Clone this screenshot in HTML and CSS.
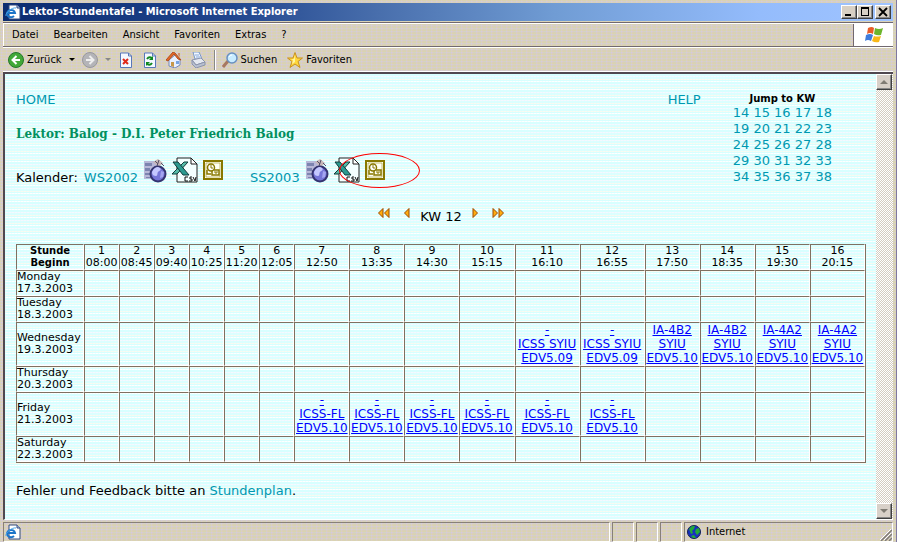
FILE: index.html
```
<!DOCTYPE html>
<html lang="de">
<head>
<meta charset="utf-8">
<title>Lektor-Stundentafel</title>
<link rel="stylesheet" href="styles.css">
</head>
<body>
<svg class="defs" aria-hidden="true">
  <symbol id="page-e" viewBox="0 0 16 16">
    <path d="M4 1h8l3 3v11H4z" fill="#fff" stroke="#334a80"/><path d="M12 1v3h3" fill="#b8c8e8" stroke="#334a80"/>
    <path d="M2 9h8a4 3.600 0 1 0-1 3" fill="none" stroke="#1c74c8" stroke-width="2"/>
    <path d="M1 12C0 9 7 3 11 4" fill="none" stroke="#49a5e8"/>
  </symbol>
  <symbol id="globe" viewBox="0 0 24 24">
    <path d="M1 2h12l3 3v15H1z" fill="#b8b8d8"/><path d="M2 4h7v3H2zM2 9h5v3H2zM2 14h5v2H2zM3 18h6v1H3z" fill="#7c84b0"/>
    <path d="M10 3l5-3 5 4-4 4z" fill="#c8b8b8"/><path d="M12 2l3 3M16 1l-2 6M18 4l3 3" stroke="#55506a"/>
    <circle cx="15" cy="15" r="7.500" fill="#7676d8" stroke="#343470" stroke-width="2"/>
    <path d="M9 13c2-5 6-6 8-4s-1 3-2 4 0 4-2 4-4-1-4-4z" fill="#c4c8ff"/><path d="M18 12l3 1-1 5-3 1z" fill="#a4a6f0"/>
  </symbol>
  <symbol id="csv" viewBox="0 0 26 26">
    <path d="M5 1h14l6 6v18H5z" fill="#f4ffff" stroke="#222"/><path d="M19 1v6h6z" fill="#fff" stroke="#222"/>
    <path d="M12 5h4L5 17H0z" fill="#55bca8" stroke="#103c3c"/><path d="M1 5h5l11 13h-6z" fill="#2b9a90" stroke="#103c3c"/>
    <path d="M16 20h-3v4h3M20 20h-2v2h2v2h-3M21 20l2 4 1-4" fill="none" stroke="#111"/>
  </symbol>
  <symbol id="outlook" viewBox="0 0 20 20">
    <path d="M0 0h20v20H0z" fill="#887800"/><path d="M2 2h16v16H2z" fill="#fffff0"/><path d="M3 3h14v14H3z" fill="#fffff0" stroke="#887800" stroke-width=".5"/>
    <path d="M4 10v4h4M11 10h5v5H9v-4" fill="none" stroke="#887800" stroke-width="1.500"/>
    <circle cx="8" cy="7.500" r="3.500" fill="#fff" stroke="#887800" stroke-width="1.500"/><path d="M8 5v3h2M12 11v2h2v-2" fill="none" stroke="#887800"/>
  </symbol>
  <symbol id="arrow" viewBox="0 0 6 10"><path d="M5 .500v9L.500 5z" fill="#ffac10" stroke="#9a4a00"/></symbol>
</svg>
<div class="window">
  <header class="titlebar">
    <svg class="i16"><use href="#page-e"/></svg>
    <span class="title">Lektor-Stundentafel - Microsoft Internet Explorer</span>
    <button class="cap" aria-label="Minimieren"><svg viewBox="0 0 12 10"><path d="M2 8h6" stroke="#000" stroke-width="2"/></svg></button>
    <button class="cap" aria-label="Maximieren"><svg viewBox="0 0 12 10"><path d="M2 1h8M2.500 1v8M9.500 1v8M2 8.500h8" fill="none" stroke="#000"/><path d="M2 1h8" stroke="#000" stroke-width="2"/></svg></button>
    <button class="cap close" aria-label="Schließen"><svg viewBox="0 0 12 10"><path d="M2 1l8 8M10 1L2 9" stroke="#000" stroke-width="1.800"/></svg></button>
  </header>
  <div class="menurow">
    <nav class="menu">
      <button>Datei</button><button>Bearbeiten</button><button>Ansicht</button><button>Favoriten</button><button>Extras</button><button>?</button>
    </nav>
    <div class="flag"><svg viewBox="0 0 20 18">
      <path d="M4 2q4-2 6 0L9 8Q6 6 3 8z" fill="#e85c28"/><path d="M11 2q4 2 8 0l-2 7q-4 1-7-1z" fill="#6cb52c"/>
      <path d="M2 9q4-2 7 0l-2 6q-3-2-6 0z" fill="#3e7cdc"/><path d="M10 10q3 1 7 0l-2 6q-4 1-7-1z" fill="#f8b818"/></svg></div>
  </div>
  <div class="toolbar">
    <button><svg class="i16" viewBox="0 0 16 16"><circle cx="8" cy="8" r="7.500" fill="#42a838" stroke="#26762a"/><path d="M8.500 4L4.500 8l4 4M5 8h7" fill="none" stroke="#fff" stroke-width="2"/></svg><span>Zurück</span></button>
    <button class="drop" aria-label="Verlauf zurück"><svg viewBox="0 0 6 4"><path d="M0 0h6L3 3z" fill="#000"/></svg></button>
    <button aria-label="Vorwärts"><svg class="i16" viewBox="0 0 16 16"><circle cx="8" cy="8" r="7.500" fill="#b4b4b8" stroke="#98989c"/><path d="M7.500 4l4 4-4 4M11 8H4" fill="none" stroke="#eee" stroke-width="2"/></svg></button>
    <button class="drop" aria-label="Verlauf vorwärts"><svg viewBox="0 0 6 4"><path d="M0 0h6L3 3z" fill="#888"/></svg></button>
    <button class="tool" aria-label="Abbrechen"><svg class="i16" viewBox="0 0 16 16"><path d="M2.500 1h8l3 3v11.500h-11z" fill="#f4f8ff" stroke="#5878b8"/><path d="M10.500 1v3h3" fill="none" stroke="#5878b8"/><path d="M5 7l5 5M10 7l-5 5" stroke="#e02818" stroke-width="2"/></svg></button>
    <button class="tool" aria-label="Aktualisieren"><svg class="i16" viewBox="0 0 16 16"><path d="M2.500 1h8l3 3v11.500h-11z" fill="#f4f8ff" stroke="#5878b8"/><path d="M10.500 1v3h3" fill="none" stroke="#5878b8"/><path d="M5 7q2-3 5-1M10 11q-2 3-5 1" fill="none" stroke="#108820" stroke-width="2"/><path d="M11 4v4H7zM4 14v-4h4z" fill="#108820"/></svg></button>
    <button class="tool" aria-label="Startseite"><svg class="i16" viewBox="0 0 16 16"><path d="M3 8v6l6 2 5-3V7L9 3z" fill="#e8f0ff" stroke="#7488b8"/><path d="M0 8l7-8 2 1 6 7-3-1-4-5-6 7z" fill="#e86828" stroke="#b05020"/><path d="M5 10h3v5l-3-1z" fill="#c89848"/><path d="M10 9h3v3h-3z" fill="#78a4e0"/><path d="M12 1h2v4l-2-2z" fill="#d09070"/></svg></button>
    <button class="tool" aria-label="Drucken"><svg class="i16" viewBox="0 0 16 16"><path d="M3 0h6l3 7H5z" fill="#f0f6ff" stroke="#7898c8"/><path d="M2 8l9-2 4 4-9 3z" fill="#e4e8f0" stroke="#8c94ac"/><path d="M2 8v4l4 4 9-3v-3l-9 3z" fill="#b8c0d0" stroke="#8c94ac"/><path d="M5 3h4M6 5h4" stroke="#88a8d8"/></svg></button>
    <span class="sep"></span>
    <button><svg class="i16" viewBox="0 0 16 16"><path d="M1 15l5-6" stroke="#a87860" stroke-width="3"/><circle cx="10" cy="6" r="5" fill="#c8ecff" stroke="#6890c0" stroke-width="1.500"/><path d="M7 5q1-2 3-2" stroke="#fff" fill="none"/></svg><span>Suchen</span></button>
    <button class="fav"><svg class="i16" viewBox="0 0 16 16"><path d="M8 .500l2 5.500h5.500L11 9.500l2 6-5-3.500-5 3.500 2-6L.500 6H6z" fill="#ffd83c" stroke="#c89020"/><path d="M8 3v7l-3 2 1-4-2-1h3z" fill="#fff4a0"/></svg><span>Favoriten</span></button>
  </div>
  <div class="viewport">
    <main>
      <div class="top">
        <div class="intro">
          <a href="#home">HOME</a>
          <h1>Lektor: Balog - D.I. Peter Friedrich Balog</h1>
          <div class="cal">
            <span>Kalender:</span>
            <div class="term"><a href="#ws">WS2002</a>
              <svg class="i24"><use href="#globe"/></svg><svg class="i26"><use href="#csv"/></svg><span class="mark"><svg class="i20"><use href="#outlook"/></svg></span></div>
            <div class="term"><a href="#ss">SS2003</a>
              <svg class="i24"><use href="#globe"/></svg><svg class="i26"><use href="#csv"/></svg><span class="mark"><svg class="i20"><use href="#outlook"/></svg><i class="ring"></i></span></div>
          </div>
        </div>
        <a class="help" href="#help">HELP</a>
        <section class="jump">
          <h2>Jump to KW</h2>
          <div><a href="#14">14</a> <a href="#15">15</a> <a href="#16">16</a> <a href="#17">17</a> <a href="#18">18</a></div>
          <div><a href="#19">19</a> <a href="#20">20</a> <a href="#21">21</a> <a href="#22">22</a> <a href="#23">23</a></div>
          <div><a href="#24">24</a> <a href="#25">25</a> <a href="#26">26</a> <a href="#27">27</a> <a href="#28">28</a></div>
          <div><a href="#29">29</a> <a href="#30">30</a> <a href="#31">31</a> <a href="#32">32</a> <a href="#33">33</a></div>
          <div><a href="#34">34</a> <a href="#35">35</a> <a href="#36">36</a> <a href="#37">37</a> <a href="#38">38</a></div>
        </section>
      </div>
      <nav class="week">
        <a class="far" href="#first" aria-label="Erste Woche"><svg><use href="#arrow"/></svg><svg><use href="#arrow"/></svg></a>
        <a href="#prev" aria-label="Vorige Woche"><svg><use href="#arrow"/></svg></a>
        <span>KW 12</span>
        <a class="next" href="#next" aria-label="Nächste Woche"><svg><use href="#arrow"/></svg></a>
        <a class="next far" href="#last" aria-label="Letzte Woche"><svg><use href="#arrow"/></svg><svg><use href="#arrow"/></svg></a>
      </nav>
      <table>
        <colgroup><col class="day"><col span="6" class="narrow"><col span="4" class="mid"><col span="2" class="wide"><col span="4" class="mid"></colgroup>
        <thead><tr><th>Stunde<br>Beginn</th><td>1<br>08:00</td><td>2<br>08:45</td><td>3<br>09:40</td><td>4<br>10:25</td><td>5<br>11:20</td><td>6<br>12:05</td><td>7<br>12:50</td><td>8<br>13:35</td><td>9<br>14:30</td><td>10<br>15:15</td><td>11<br>16:10</td><td>12<br>16:55</td><td>13<br>17:50</td><td>14<br>18:35</td><td>15<br>19:30</td><td>16<br>20:15</td></tr></thead>
        <tbody>
        <tr><th>Monday<br>17.3.2003</th><td></td><td></td><td></td><td></td><td></td><td></td><td></td><td></td><td></td><td></td><td></td><td></td><td></td><td></td><td></td><td></td></tr>
        <tr><th>Tuesday<br>18.3.2003</th><td></td><td></td><td></td><td></td><td></td><td></td><td></td><td></td><td></td><td></td><td></td><td></td><td></td><td></td><td></td><td></td></tr>
        <tr><th>Wednesday<br>19.3.2003</th><td></td><td></td><td></td><td></td><td></td><td></td><td></td><td></td><td></td><td></td><td><a href="#w11">-<br>ICSS SYIU<br>EDV5.09</a></td><td><a href="#w12">-<br>ICSS SYIU<br>EDV5.09</a></td><td><a href="#w13">IA-4B2<br>SYIU<br>EDV5.10</a></td><td><a href="#w14">IA-4B2<br>SYIU<br>EDV5.10</a></td><td><a href="#w15">IA-4A2<br>SYIU<br>EDV5.10</a></td><td><a href="#w16">IA-4A2<br>SYIU<br>EDV5.10</a></td></tr>
        <tr><th>Thursday<br>20.3.2003</th><td></td><td></td><td></td><td></td><td></td><td></td><td></td><td></td><td></td><td></td><td></td><td></td><td></td><td></td><td></td><td></td></tr>
        <tr><th>Friday<br>21.3.2003</th><td></td><td></td><td></td><td></td><td></td><td></td><td><a href="#f7">-<br>ICSS-FL<br>EDV5.10</a></td><td><a href="#f8">-<br>ICSS-FL<br>EDV5.10</a></td><td><a href="#f9">-<br>ICSS-FL<br>EDV5.10</a></td><td><a href="#f10">-<br>ICSS-FL<br>EDV5.10</a></td><td><a href="#f11">-<br>ICSS-FL<br>EDV5.10</a></td><td><a href="#f12">-<br>ICSS-FL<br>EDV5.10</a></td><td></td><td></td><td></td><td></td></tr>
        <tr><th>Saturday<br>22.3.2003</th><td></td><td></td><td></td><td></td><td></td><td></td><td></td><td></td><td></td><td></td><td></td><td></td><td></td><td></td><td></td><td></td></tr>
        </tbody>
      </table>
      <p>Fehler und Feedback bitte an <a href="#mail">Stundenplan</a>.</p>
    </main>
    <div class="scroll">
      <button aria-label="Nach oben"><svg viewBox="0 0 8 4"><path d="M0 4h8L4 0z" fill="#807c74"/></svg></button>
      <button aria-label="Nach unten"><svg viewBox="0 0 8 4"><path d="M0 0h8L4 4z" fill="#807c74"/></svg></button>
    </div>
  </div>
  <footer class="status">
    <div class="pane grow"><svg class="i16"><use href="#page-e"/></svg></div>
    <div class="pane"></div><div class="pane"></div><div class="pane"></div>
    <div class="pane zone"><svg class="i14" viewBox="0 0 14 14"><circle cx="7" cy="7" r="6.500" fill="#1830c0" stroke="#102050"/><path d="M2 4q3-4 6-3L7 4 5 6l1 2-2 1zM9 4l3-1 1 4-3 3-2-3zM4 11l3-1 2 3H6z" fill="#20a838"/></svg><span>Internet</span>
      <svg class="grip" viewBox="0 0 12 12"><path d="M1 12L12 1M5 12l7-7M9 12l3-3" stroke="#807c78" stroke-width="1.500"/><path d="M0 11L11 0M4 11l7-7" stroke="#fff"/></svg></div>
  </footer>
</div>
</body>
</html>
```
FILE: styles.css
```
* { box-sizing: border-box; }
body { margin: 0; font: 11px/14px "DejaVu Sans Condensed", "DejaVu Sans", sans-serif; color: #000; }
svg { display: block; flex: none; }
button { font: inherit; color: inherit; background: none; border: 0; padding: 0; display: flex; align-items: center; }
.defs { position: absolute; width: 0; height: 0; }
.i14 { width: 14px; height: 14px; }
.i16 { width: 16px; height: 16px; }
.i20 { width: 20px; height: 20px; }
.i24 { width: 24px; height: 24px; }
.i26 { width: 26px; height: 26px; }

.window {
  min-height: 100vh; display: flex; flex-direction: column; padding: 3px 3px 1px;
  background:
    repeating-linear-gradient(90deg, #d8d8a438 0 1px, #d0c8ff38 1px 2px, #f0c8b838 2px 3px, #d8d8a438 3px 5px),
    repeating-linear-gradient(#d9d2b4 0 1px, #d4cdd2 1px 2px, #d7cfbc 2px 3px);
  border-right: 1px solid #8078a0;
}
.titlebar { height: 18px; display: flex; align-items: center; padding: 0 2px; color: #fff; font-weight: bold; background: linear-gradient(90deg, #0c2c70, #20448c 25%, #486eac 42%, #709cd4 62%, #94bcfc 85%, #a0c4ff); }
.title { flex: 1; margin-left: 1px; white-space: nowrap; }
.cap { width: 16px; height: 14px; justify-content: center; background: #d8d0c4; border: 1px solid; border-color: #fff #404040 #404040 #fff; box-shadow: inset -1px -1px #888; }
.cap svg { width: 12px; height: 10px; }
.close { margin-left: 2px; }

.menurow { height: 25px; margin-top: 1px; display: flex; border-top: 1px solid #706870; border-bottom: 1px solid #706870; box-shadow: inset 0 1px #fff, inset 1px 0 #fff; }
.menu { flex: 1; display: flex; gap: 15px; padding-left: 9px; }
.flag { width: 40px; margin-top: 1px; background: #fff; border-left: 1px solid #706870; display: grid; place-items: center; }
.flag svg { width: 20px; height: 18px; }
.toolbar { height: 25px; display: flex; align-items: center; padding-left: 5px; border-top: 1px solid #fff; border-bottom: 1px solid #fff; }
.toolbar span { margin-left: 3px; }
.drop { margin: 0 7px; }
.drop svg { width: 6px; height: 4px; }
.tool { margin-left: 8px; }
.drop + .tool { margin-left: 0; }
.toolbar .sep { height: 20px; margin: 0 6px 0 8px; border-left: 1px solid #888; border-right: 1px solid #fff; }
.fav { margin-left: 10px; }

.viewport { flex: 1; display: flex; border: solid #504850; border-width: 2px 0 0 2px; border-bottom: 1px solid #fff; }
main {
  flex: 1; min-width: 0; padding: 18px 10px 0 11px; font: 13px/16px "DejaVu Sans", Verdana, sans-serif;
  background:
    repeating-linear-gradient(90deg, #d8ffff60 0 1px, #fff0 1px 3px),
    repeating-linear-gradient(#d8ffff 0 2px, #f6f8ff 2px 3px, #dcffff 3px 5px, #fafaf0 5px 6px, #d8ffff 6px 7px, #fff 7px 8px);
}
main a { color: #0098b0; text-decoration: none; }
.top { display: flex; }
.intro { flex: 1; }
.help { margin-right: 32px; }
h1 { margin: 18px 0 16px; font: bold 12px/16px "DejaVu Serif", serif; color: #009060; white-space: nowrap; }
.cal, .term { display: flex; align-items: flex-end; }
.cal { gap: 6px; height: 28px; }
.term { gap: 5px; margin-right: 21px; }
.term svg { margin-bottom: 3px; }
.term .mark svg { margin-bottom: 6px; }
.mark { position: relative; }
.ring { position: absolute; left: -26px; top: -7px; width: 81px; height: 35px; border: 1px solid #f00; border-radius: 50%; }
.jump { margin-right: 34px; text-align: center; }
h2 { margin: 0; font-size: 10px; line-height: 13px; }
.week { display: flex; justify-content: center; align-items: flex-start; gap: 14px; margin: 22px 0 19px; }
.week span { margin: 1px -4px 0; }
.week a { display: flex; }
.week svg { width: 6px; height: 10px; }
.next svg { transform: scaleX(-1); }

table { width: 100%; table-layout: fixed; border-collapse: separate; border-spacing: 0; border: solid #807060; border-width: 0 1px 1px 0; }
.day { width: 68px; }
.narrow { width: 35px; }
.mid { width: 55px; }
.wide { width: 65px; }
th, td { height: 26px; padding: 0; border: 1px solid; border-color: #807060 #fff #fff #807060; font-size: 11px; line-height: 12px; text-align: center; white-space: nowrap; }
thead th { font-size: 10px; }
tbody th { font-weight: normal; text-align: left; }
table a { font-size: 12px; line-height: 14px; color: #00f; text-decoration: underline; display: block; }
p { margin: 20px 0; }

.scroll { width: 17px; display: flex; flex-direction: column; justify-content: space-between; background: conic-gradient(#d4ccc0 25%, #fff 0 50%, #d4ccc0 0 75%, #fff 0) 0 0 / 2px 2px; }
.scroll button { width: 16px; height: 16px; justify-content: center; background: #d8d0c8; border: 1px solid; border-color: #fff #404040 #404040 #fff; box-shadow: inset -1px -1px #888; }
.scroll svg { width: 8px; height: 4px; }

.status { height: 22px; display: flex; gap: 2px; padding-top: 2px; }
.pane { width: 22px; display: flex; align-items: center; border: 1px solid; border-color: #888078 #fff #fff #888078; }
.grow { flex: 1; padding-left: 1px; }
.zone { width: 209px; padding-left: 2px; }
.zone span { flex: 1; margin-left: 5px; }
.grip { width: 12px; height: 12px; align-self: flex-end; }
```
